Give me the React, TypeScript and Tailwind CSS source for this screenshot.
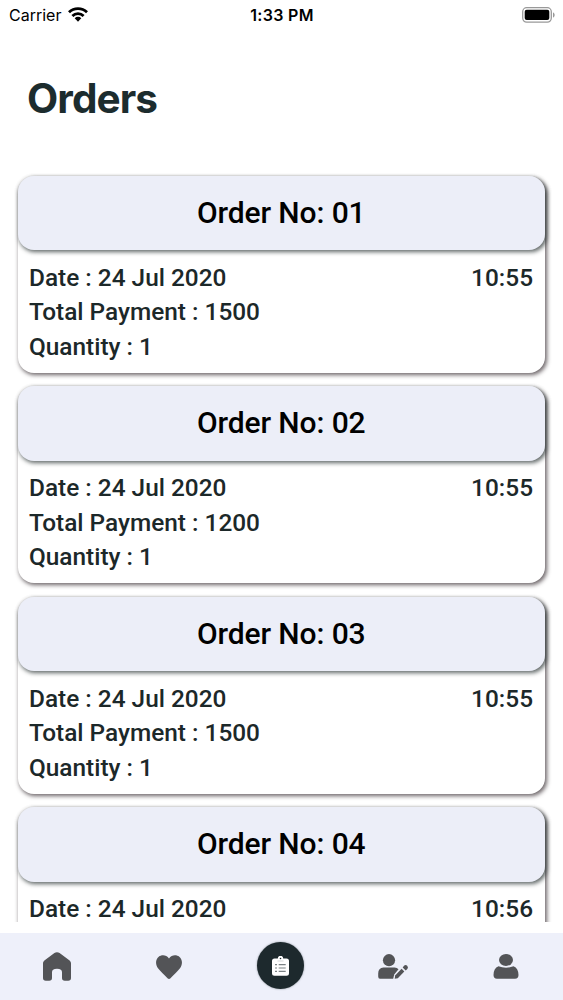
import type { ReactNode } from "react";

type Order = {
  no: string;
  date: string;
  time: string;
  total: number;
  quantity: number;
};

const orders: Order[] = [
  { no: "01", date: "24 Jul 2020", time: "10:55", total: 1500, quantity: 1 },
  { no: "02", date: "24 Jul 2020", time: "10:55", total: 1200, quantity: 1 },
  { no: "03", date: "24 Jul 2020", time: "10:55", total: 1500, quantity: 1 },
  { no: "04", date: "24 Jul 2020", time: "10:56", total: 1500, quantity: 1 },
];

function StatusBar() {
  return (
    <div className="grid h-[29px] shrink-0 grid-cols-3 items-center pl-[9px] pr-2 font-['Inter',sans-serif] text-black">
      <div className="flex items-center gap-[7px]">
        <span className="text-[16px]">Carrier</span>
        <svg viewBox="0 0 20 15" className="h-[15px] w-5" aria-hidden="true">
          <g fill="none" stroke="black" strokeWidth="2.8">
            <path d="M1 5.3a13 13 0 0 1 18 0" />
            <path d="M4.4 9a8 8 0 0 1 11.2 0" />
          </g>
          <path d="M6.7 11.2a4.7 4.7 0 0 1 6.6 0L10 14.7z" />
        </svg>
      </div>
      <span className="text-center text-[16px] font-semibold tracking-[0.3px]">1:33 PM</span>
      <svg viewBox="0 0 33 16" className="h-4 w-[33px] justify-self-end" aria-hidden="true">
        <rect x="0.7" y="0.7" width="28.6" height="14.4" rx="4" fill="none" stroke="#999" strokeWidth="1.3" />
        <rect x="2.7" y="2.8" width="24.6" height="10.2" rx="2" />
        <path d="M31 5.5c2.2.6 2.2 4.4 0 5z" fill="#999" />
      </svg>
    </div>
  );
}

function OrderCard({ order }: { order: Order }) {
  return (
    <article className="h-[197px] shrink-0 rounded-[16px] bg-white shadow-[1.5px_2px_4px_rgba(45,35,40,0.7)]">
      <h2 className="flex h-[74.5px] items-center justify-center rounded-[16px] bg-[#eceef8] pb-px text-[30px] font-medium tracking-[-0.1px] text-black shadow-[1.5px_2px_4px_rgba(30,40,40,0.7)]">
        Order No: {order.no}
      </h2>
      <div className="pl-[11.5px] pr-3 pt-[10.7px] text-[24.4px] font-medium leading-[34.5px] text-[#1c2829]">
        <div className="flex justify-between">
          <span>Date : {order.date}</span>
          <span>{order.time}</span>
        </div>
        <p>Total Payment : {order.total}</p>
        <p>Quantity : {order.quantity}</p>
      </div>
    </article>
  );
}

function TabItem({ label, children }: { label: string; children: ReactNode }) {
  return (
    <button type="button" aria-label={label} className="flex h-full w-[112.4px] items-center justify-center">
      {children}
    </button>
  );
}

function TabBar() {
  return (
    <nav className="flex h-[67px] shrink-0 justify-center bg-[#eef0fa] text-[#535457]">
      <TabItem label="Home">
        <svg viewBox="0 0 28 29" className="ml-px h-[29px] w-7" fill="currentColor">
          <path d="M0 11.5c0-1.4.6-2.4 1.7-3.2L11.4 1.1c1.6-1.2 3.6-1.2 5.2 0l9.7 7.2c1.1.8 1.7 1.8 1.7 3.2V26c0 1.8-1 2.8-2.8 2.8h-3.4c-1.8 0-2.8-1-2.8-2.8v-5.7c0-2.3-1.4-3.6-5-3.6s-5 1.3-5 3.600V26c0 1.800-1 2.800-2.800 2.800H2.800C1 28.800 0 27.800 0 26z" />
        </svg>
      </TabItem>
      <TabItem label="Favourites">
        <svg viewBox="0 0 26 24" className="h-6 w-[26px]" fill="currentColor">
          <path d="M13 3.500C15.500-.4 20.400-.7 23.300 1.700c3.600 3 3.200 8.400.7 11.600-2.300 3-6 6.500-9.500 9.900-1 .9-2 .9-3 0C8 19.800 4.300 16.300 2 13.300-.5 10.100-.9 4.700 2.700 1.700 5.600-.7 10.500-.4 13 3.500z" />
        </svg>
      </TabItem>
      <TabItem label="Orders">
        <span className="mb-[3px] mr-px flex size-[47px] items-center justify-center rounded-full bg-[#1d292d] shadow-[0_0_2px_rgba(29,41,45,0.5)]">
          <svg viewBox="0 0 17 20" className="mt-0.5 h-5 w-[17px]">
            <path d="M2.500 2.500H5.800a2.700 2.700 0 0 1 5.400 0h3.300Q17 2.500 17 5v12.200q0 2.500-2.500 2.500h-12Q0 19.700 0 17.200V5q0-2.500 2.500-2.500z" fill="white" />
            <circle cx="8.500" cy="2.500" r="0.800" fill="#1d292d" />
            <path d="M5.500 5h6" stroke="#c4c9cb" strokeWidth="0.700" />
            <path d="M3 8.700h2M3 12h2M3 15.300h2M6.700 8.700h7M6.700 12h7M6.700 15.300h7" stroke="#7a8184" strokeWidth="1.200" />
          </svg>
        </span>
      </TabItem>
      <TabItem label="Edit profile">
        <svg viewBox="0 0 31 25" className="h-[25px] w-[31px]" fill="currentColor">
          <ellipse cx="11" cy="6.200" rx="6.100" ry="6.100" />
          <path d="M5.500 13.500h11q2.600.2 4 1.800l-4.300 5.200-1 4.200H2Q.2 24.700.2 22.500v-3q0-5.400 5.300-6z" />
          <path d="m23.600 14.700 2.700 2.800-6.500 6.700-3.100.5.400-3.300z" />
          <path d="m24.700 13.500 1.300-1.700q1.500-1.400 3.200 0 1.500 1.700.1 3.200l-1.600 1.500z" />
        </svg>
      </TabItem>
      <TabItem label="Profile">
        <svg viewBox="0 0 26 25" className="h-[25px] w-[26px]" fill="currentColor">
          <ellipse cx="13" cy="6" rx="7" ry="5.900" />
          <path d="M5.500 12.300c4.500 1.900 10.500 1.900 15 0 3.400 1.200 5 4.300 5 8.700q0 3.700-3.500 3.700H4Q.5 24.700.5 21c0-4.400 1.600-7.500 5-8.700z" />
        </svg>
      </TabItem>
    </nav>
  );
}

export default function App() {
  return (
    <main className="flex h-[1000px] w-[563px] flex-col overflow-hidden bg-white font-['Roboto',sans-serif]">
      <StatusBar />
      <header className="flex h-[137px] shrink-0 items-center pl-[27px] pt-[3px] font-['Inter',sans-serif]">
        <h1 className="text-[40.5px] font-bold leading-none tracking-[-0.9px] text-[#1c2c2e]">Orders</h1>
      </header>
      <section className="flex h-[756px] shrink-0 flex-col gap-[13.5px] overflow-hidden pl-[17.5px] pr-[18px] pt-[9.5px]">
        {orders.map((order) => (
          <OrderCard key={order.no} order={order} />
        ))}
      </section>
      <div className="h-[11px] shrink-0" />
      <TabBar />
    </main>
  );
}
